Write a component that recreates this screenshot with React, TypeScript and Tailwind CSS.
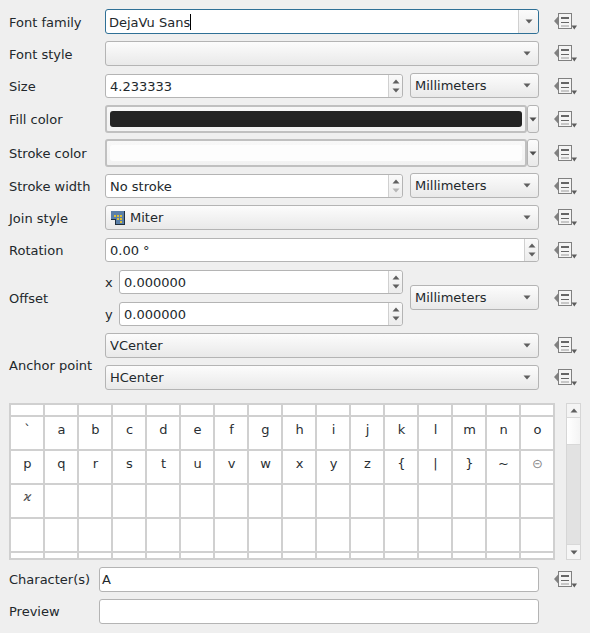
import React from "react";

const fieldBorder = "border border-[#b4b4b4] rounded-[3px]";

function Arrow({ color = "#5f5f5f", up = false }: { color?: string; up?: boolean }) {
  return (
    <svg width="8" height="5" viewBox="0 0 8 5" className="block">
      <polygon points={up ? "0.5,4.5 7.5,4.5 4,0.5" : "0.5,0.5 7.5,0.5 4,4.5"} fill={color} />
    </svg>
  );
}

function DataBtn() {
  return (
    <div className="ml-[15px] w-[23px] h-[17px] shrink-0">
      <svg width="23" height="17" viewBox="0 0 23 17" className="block">
        <polygon points="0,8 5,2.5 5,13.5" fill="#808080" />
        <rect x="4.5" y="0.5" width="13" height="15" fill="#f4f4f4" stroke="#808080" />
        <rect x="7" y="4" width="8" height="2" fill="#666666" />
        <rect x="7" y="9" width="8" height="1" fill="#666666" />
        <rect x="7" y="12.5" width="8" height="1" fill="#9a9a9a" />
        <polygon points="17.5,12.5 23,12.5 20.25,16.5" fill="#5c5c5c" />
      </svg>
    </div>
  );
}

function Combo({ text, className = "", icon }: { text?: string; className?: string; icon?: React.ReactNode }) {
  return (
    <div className={`flex items-center h-full pl-[4px] pr-[7px] bg-gradient-to-b from-[#fcfcfc] to-[#e9e9e9] ${fieldBorder} ${className}`}>
      {icon}
      <span className="flex-1 truncate">{text}</span>
      <Arrow />
    </div>
  );
}

function Spin({ text, className = "", downColor = "#5f5f5f" }: { text: string; className?: string; downColor?: string }) {
  return (
    <div className={`flex h-full bg-white ${fieldBorder} ${className}`}>
      <span className="flex-1 pl-[4px] flex items-center">{text}</span>
      <div className="w-[14px] border-l border-[#d0d0d0] bg-gradient-to-b from-[#fafafa] to-[#ececec] rounded-r-[3px] flex flex-col items-center justify-center gap-[4px]">
        <Arrow up />
        <Arrow color={downColor} />
      </div>
    </div>
  );
}

function ColorBtn({ swatch }: { swatch: string }) {
  return (
    <div className="flex h-full flex-1">
      <div className="flex-1 px-[3px] py-[4px] border-2 border-[#c0c0c0] rounded-[3px] bg-gradient-to-b from-[#f8f8f8] to-[#f2f2f2]">
        <div className={`h-full rounded-[3px] ${swatch}`} />
      </div>
      <div className={`w-[12px] flex items-center justify-center bg-gradient-to-b from-[#fcfcfc] to-[#e9e9e9] ${fieldBorder}`}>
        <Arrow color="#4f4f4f" />
      </div>
    </div>
  );
}

function Row({ label, h, mt, children, tool = true, labelW = "w-[96px]", nudge = "" }: { label: string; h: string; mt: string; children: React.ReactNode; tool?: boolean; labelW?: string; nudge?: string }) {
  return (
    <div className={`flex items-center ${h} ${mt}`}>
      <div className={`${labelW} shrink-0 ${nudge}`}>{label}</div>
      <div className="flex-1 h-full flex">{children}</div>
      {tool ? <DataBtn /> : <div className="ml-[15px] w-[23px]" />}
    </div>
  );
}

function UnitCombo() {
  return (
    <div className="w-[129px] ml-[7px] shrink-0 h-[25px] -mt-px">
      <Combo text="Millimeters" />
    </div>
  );
}

function JoinIcon() {
  return (
    <svg width="14" height="14" viewBox="0 0 14 14" className="block ml-px mr-[5px] shrink-0">
      <polygon points="0,0 14,0 14,14 5,14 5,9 0,9" fill="#5a7fa9" />
      <rect x="13" y="0" width="1" height="14" fill="#22303c" />
      <rect x="5" y="13" width="9" height="1" fill="#22303c" />
      <rect x="0" y="8" width="5" height="1" fill="#22303c" />
      <rect x="4" y="9" width="1" height="5" fill="#22303c" />
      <g fill="#dcc038">
        <rect x="3" y="4" width="2" height="2" />
        <rect x="6" y="4" width="2" height="2" />
        <rect x="9" y="4" width="2" height="2" />
        <rect x="9" y="7" width="2" height="2" />
        <rect x="6" y="7" width="2" height="2" />
        <rect x="9" y="10" width="2" height="2" />
      </g>
    </svg>
  );
}

const chars: string[][] = [
  Array(16).fill(""),
  ["`", "a", "b", "c", "d", "e", "f", "g", "h", "i", "j", "k", "l", "m", "n", "o"],
  ["p", "q", "r", "s", "t", "u", "v", "w", "x", "y", "z", "{", "|", "}", "~", "⊝"],
  ["ϰ", ...Array(15).fill("")],
  Array(16).fill(""),
  Array(16).fill(""),
];

function cellTone(c: string) {
  if (c === "⊝") return "text-[#8a8a8a]";
  if (c === "ϰ") return "text-[#4a4a4a] text-[12px] italic";
  return "text-[#2a2f33]";
}

function CharTable() {
  return (
    <div className="w-[546px] h-[157px] shrink-0 bg-white border-l-2 border-t-2 border-b-2 border-[#d0d0d0] overflow-hidden grid grid-cols-[repeat(16,34px)] grid-rows-[12px_34px_34px_34px_34px_34px]">
      {chars.flatMap((row, r) =>
        row.map((c, i) => (
          <div key={`${r}-${i}`} className={`border-r-2 border-b-2 border-[#d0d0d0] flex items-center justify-center pb-[8px] pl-px ${cellTone(c)}`}>
            {c}
          </div>
        ))
      )}
    </div>
  );
}

function Scrollbar() {
  return (
    <div className="ml-[11px] w-[15px] h-[157px] shrink-0 flex flex-col bg-[#e2e2e2] border border-[#d6d6d6]">
      <div className="h-[13px] bg-[#f4f4f4] flex items-center justify-center"><Arrow up /></div>
      <div className="h-[28px] bg-gradient-to-r from-[#ffffff] to-[#f4f4f4] border-y border-[#d8d8d8]" />
      <div className="flex-1" />
      <div className="h-[15px] bg-[#f6f6f6] border-t border-[#d8d8d8] flex items-center justify-center"><Arrow /></div>
    </div>
  );
}

export default function App() {
  return (
    <div className="w-[590px] h-[633px] bg-[#efefef] pl-[9px] pr-[13px] pt-[9px] overflow-hidden text-[13px] leading-none text-[#22282c] font-['DejaVu_Sans',sans-serif]">
      <Row label="Font family" h="h-[25px]" mt="mt-0" nudge="pt-[1px]">
        <div className="flex flex-1 h-full bg-white border border-[#2f7096] rounded-[3px]">
          <div className="flex-1 flex items-center pl-[3px] pt-[1px]">
            <span>DejaVu Sans</span>
            <span className="inline-block w-px h-[16px] bg-black" />
          </div>
          <div className="w-[20px] border-l border-[#d0d0d0] bg-gradient-to-b from-[#fbfbfb] to-[#ececec] rounded-r-[3px] flex items-center justify-center"><Arrow /></div>
        </div>
      </Row>
      <Row label="Font style" h="h-[25px]" mt="mt-[7px]" nudge="pt-[1px]"><Combo className="flex-1" /></Row>
      <Row label="Size" h="h-[24px]" mt="mt-[8px]">
        <Spin text="4.233333" className="flex-1" />
        <UnitCombo />
      </Row>
      <Row label="Fill color" h="h-[28px]" mt="mt-[7px]"><ColorBtn swatch="bg-[#242424]" /></Row>
      <Row label="Stroke color" h="h-[28px]" mt="mt-[6px]"><ColorBtn swatch="bg-[#fdfdfd]" /></Row>
      <Row label="Stroke width" h="h-[24px]" mt="mt-[7px]">
        <Spin text="No stroke" className="flex-1" downColor="#b5b5b5" />
        <UnitCombo />
      </Row>
      <Row label="Join style" h="h-[25px]" mt="mt-[7px]" nudge="pt-[1px]"><Combo text="Miter" className="flex-1" icon={<JoinIcon />} /></Row>
      <Row label="Rotation" h="h-[24px]" mt="mt-[8px]"><Spin text="0.00 °" className="flex-1" /></Row>

      <div className="flex items-center h-[56px] mt-[8px]">
        <div className="w-[96px] shrink-0">Offset</div>
        <div className="flex-1 flex items-center">
          <div className="flex-1 flex flex-col gap-[8px]">
            <div className="flex items-center h-[24px]">
              <span className="w-[14px] shrink-0">x</span>
              <Spin text="0.000000" className="flex-1" />
            </div>
            <div className="flex items-center h-[24px]">
              <span className="w-[14px] shrink-0">y</span>
              <Spin text="0.000000" className="flex-1" />
            </div>
          </div>
          <div className="h-[24px] flex"><UnitCombo /></div>
        </div>
        <DataBtn />
      </div>

      <div className="flex items-center h-[57px] mt-[7px]">
        <div className="w-[96px] shrink-0 pt-[7px]">Anchor point</div>
        <div className="flex-1 flex flex-col gap-[7px]">
          <div className="h-[25px] flex"><Combo text="VCenter" className="flex-1" /></div>
          <div className="h-[25px] flex"><Combo text="HCenter" className="flex-1" /></div>
        </div>
        <div className="flex flex-col gap-[15px]">
          <DataBtn />
          <DataBtn />
        </div>
      </div>

      <div className="flex mt-[13px] w-[572px]">
        <CharTable />
        <Scrollbar />
      </div>

      <Row label="Character(s)" h="h-[25px]" mt="mt-[7px]" labelW="w-[90px]">
        <div className={`flex-1 h-full bg-white flex items-center pl-[2px] ${fieldBorder}`}>A</div>
      </Row>
      <Row label="Preview" h="h-[25px]" mt="mt-[7px]" labelW="w-[90px]" tool={false}>
        <div className={`flex-1 h-full bg-white ${fieldBorder}`} />
      </Row>
    </div>
  );
}
